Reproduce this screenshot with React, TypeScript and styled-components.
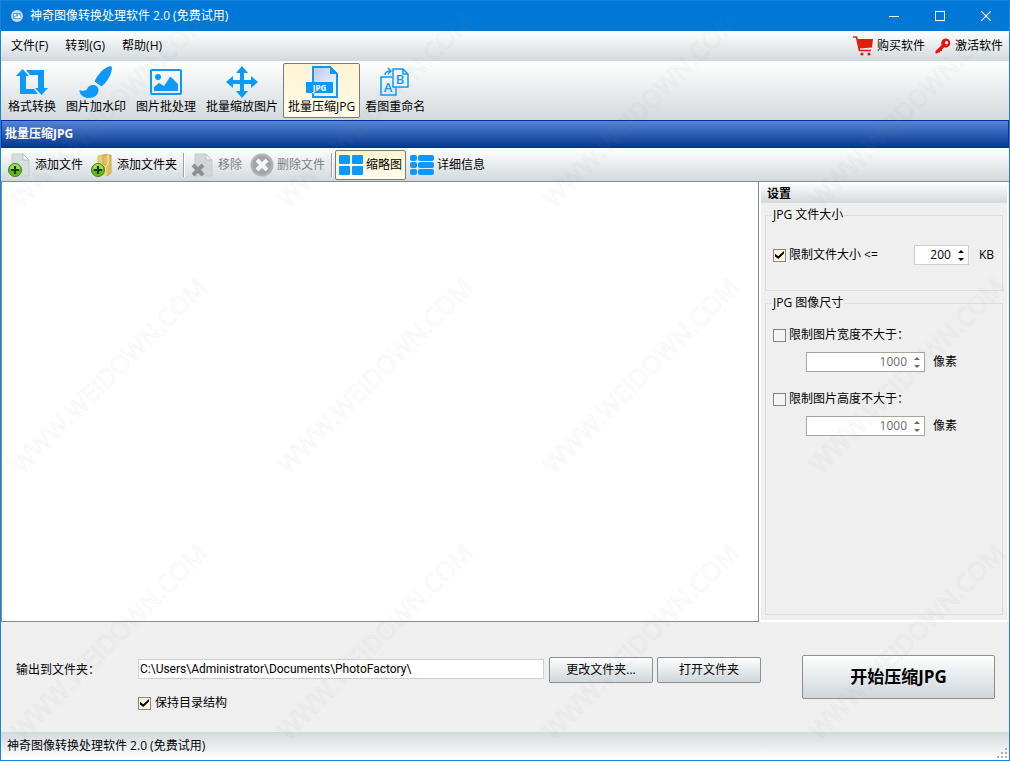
import React, { useState } from "react";
import styled, { createGlobalStyle } from "styled-components";

const GlobalStyle = createGlobalStyle`
  *, *::before, *::after { box-sizing: border-box; }
  body {
    margin: 0;
    background: #f0f0f0;
    color: #000;
    font: 12px/16px "Open Sans", "Noto Sans CJK SC", sans-serif;
  }
  button, input { font: inherit; color: inherit; }
`;

const silver = "linear-gradient(#ffffff, #d2d9dd)";

const Window = styled.div`
  position: relative;
  display: flex;
  flex-direction: column;
  min-height: 100vh;
  border: 1px solid #1883d7;
  background: #efefef;
`;

const TitleBar = styled.header`
  display: flex;
  align-items: center;
  height: 30px;
  padding-left: 8px;
  background: #0078d7;
  color: #fff;
`;

const Title = styled.h1`
  flex: 1;
  margin: 0 0 0 5px;
  font-size: 12px;
  font-weight: 400;
`;

const PlainButton = styled.button`
  display: flex;
  align-items: center;
  justify-content: center;
  padding: 0;
  border: 0;
  background: none;
  white-space: nowrap;
`;

const CaptionButton = styled(PlainButton)`
  width: 46px;
  height: 30px;
`;

const MenuBar = styled.nav`
  display: flex;
  align-items: center;
  gap: 1px;
  height: 30px;
  padding: 0 6px 0 2px;
  background: ${silver};
`;

const MenuItem = styled(PlainButton)`
  padding: 0 8px;
`;

const MenuSpacer = styled.div`
  flex: 1;
`;

const MenuLink = styled.a`
  display: flex;
  align-items: center;
  gap: 3px;
  margin-left: 9px;
  color: inherit;
  text-decoration: none;
`;

const ToolBar = styled.div`
  display: flex;
  align-items: center;
  height: 59px;
  padding: 0 2px;
  background: ${silver};
`;

const toggled = `
  border-color: #7b7b7b;
  background: linear-gradient(#fff5d2, #fffbea);
`;

const ToolButton = styled.button<{ $active?: boolean }>`
  display: flex;
  flex-direction: column;
  align-items: center;
  gap: 1px;
  height: 55px;
  padding: 2px 4px 0;
  border: 1px solid transparent;
  border-radius: 2px;
  background: none;
  white-space: nowrap;
  ${(p) => p.$active && toggled}
`;

const Heading = styled.h2`
  height: 28px;
  margin: 0;
  padding: 0 3px;
  border: 1px solid #00309c;
  background: linear-gradient(#5585d6, #06388f);
  color: #fff;
  font-size: 12px;
  font-weight: 700;
  line-height: 25px;
`;

const ActionBar = styled.div`
  display: flex;
  align-items: center;
  height: 34px;
  padding: 0 3px;
  border-bottom: 1px solid #858b95;
  background: ${silver};
`;

const ActionButton = styled.button<{ $active?: boolean }>`
  display: flex;
  align-items: center;
  gap: 3px;
  height: 30px;
  padding: 0 3px;
  border: 1px solid transparent;
  border-radius: 2px;
  background: none;
  white-space: nowrap;
  ${(p) => p.$active && toggled}
  &:disabled { color: #7a7f82; }
`;

const Separator = styled.span`
  width: 2px;
  height: 24px;
  margin: 0 2px;
  border-left: 1px solid #9a9fa3;
  border-right: 1px solid #fff;
`;

const Main = styled.main`
  display: flex;
  flex: 1;
`;

const FileList = styled.section`
  flex: 1;
  border: solid #858b95;
  border-width: 0 1px 1px;
  background: #fff;
`;

const Settings = styled.aside`
  display: flex;
  flex-direction: column;
  width: 250px;
  padding-bottom: 1px;
  border: 2px solid #fff;
  border-top: 0;
`;

const SettingsTitle = styled.h3`
  height: 21px;
  margin: 0 0 4px;
  padding: 0 6px;
  background: ${silver};
  font-size: 12px;
  font-weight: 700;
  line-height: 23px;
`;

const Group = styled.fieldset<{ $grow?: boolean }>`
  flex: ${(p) => (p.$grow ? 1 : "none")};
  height: ${(p) => (p.$grow ? "auto" : "84px")};
  min-width: 0;
  margin: 0 4px 4px;
  padding: 0 8px 0 7px;
  border: 1px solid #dcdcdc;
`;

const Legend = styled.legend`
  margin-left: -1px;
  padding: 0 1px;
`;

const OptionRow = styled.div`
  display: flex;
  align-items: center;
  height: 20px;
`;

const SizeRow = styled(OptionRow)`
  margin-top: 22px;
`;

const CheckLabel = styled.label`
  display: flex;
  align-items: center;
  gap: 3px;
  flex: 1;
  white-space: nowrap;
`;

const CheckBox = styled.input`
  appearance: none;
  display: grid;
  place-content: center;
  flex: none;
  width: 13px;
  height: 13px;
  margin: 0;
  border: 1px solid #858585;
  background: #f4f4f4;
  &:checked { background: #fff8de; }
  &:checked::after {
    content: "";
    width: 9px;
    height: 8px;
    background: #000;
    clip-path: polygon(0 35%, 36% 65%, 100% 0, 100% 32%, 36% 100%, 0 68%);
  }
`;

const Unit = styled.span<{ $gap: number }>`
  margin-left: ${(p) => p.$gap}px;
`;

const LimitBlock = styled.div`
  height: 64px;
  padding-top: 16px;
`;

const LimitRow = styled(OptionRow)`
  margin: 9px 0 0 33px;
`;

const SpinFrame = styled.span<{ $width: number; $off: boolean }>`
  display: flex;
  align-items: center;
  width: ${(p) => p.$width}px;
  height: 20px;
  border: 1px solid ${(p) => (p.$off ? "#aaa797" : "#cfcfcf")};
  background: #fff;
  color: ${(p) => (p.$off ? "#6d6d6d" : "#000")};
`;

const SpinInput = styled.input`
  flex: 1;
  min-width: 0;
  height: 18px;
  padding: 0 3px 2px 0;
  border: 0;
  outline: 0;
  background: none;
  text-align: right;
`;

const SpinButtons = styled.span`
  display: flex;
  flex-direction: column;
  width: 14px;
`;

const SpinButton = styled(PlainButton)`
  height: 8px;
`;

const Output = styled.footer`
  display: flex;
  align-items: flex-start;
  height: 110px;
  padding: 33px 14px 0 15px;
`;

const OutputForm = styled.div`
  display: grid;
  grid-template-columns: 118px 1fr 104px 104px;
  align-items: center;
  column-gap: 4px;
  row-gap: 12px;
  flex: 1;
  padding-top: 2px;
`;

const PathInput = styled.input`
  min-width: 0;
  height: 20px;
  margin: 0 1px 2px 0;
  padding: 0 1px;
  border: 1px solid #cfcfcf;
  background: #fff;
  font-family: Roboto, "Noto Sans CJK SC", sans-serif;
`;

const KeepTree = styled(CheckLabel)`
  grid-column: 2;
  gap: 4px;
`;

const PushButton = styled.button`
  height: 26px;
  padding: 0;
  border: 1px solid #8c8e90;
  border-radius: 2px;
  background: linear-gradient(#fdfefe, #ced7dc);
  white-space: nowrap;
`;

const StartButton = styled(PushButton)`
  width: 193px;
  height: 44px;
  margin-left: 41px;
  font-size: 17px;
  font-weight: 700;
`;

const StatusBar = styled.div`
  display: flex;
  align-items: center;
  justify-content: space-between;
  height: 28px;
  padding-left: 6px;
  background: linear-gradient(#d2d9dd, #ffffff);
`;

const Grip = styled.svg`
  align-self: flex-end;
  margin: 0 2px 2px 0;
`;

const Watermark = styled.svg`
  position: absolute;
  inset: 0;
  width: 100%;
  height: 100%;
  pointer-events: none;
`;

const BLUE = "#0c99fb";

const AppIcon = () => (
  <svg width="16" height="16" viewBox="0 0 16 16">
    <rect width="16" height="16" rx="3" fill="#0d6fd8" />
    <circle cx="8" cy="8" r="6" fill="#b9dcf6" />
    <rect x="4" y="5" width="8" height="6" rx="1" fill="#5aa6e8" />
    <path d="M5 10l2-2 1 1 2-3 2 4z" fill="#fff" />
    <circle cx="6" cy="7" r="1" fill="#fff" />
  </svg>
);

const CartIcon = () => (
  <svg width="21" height="20" viewBox="0 0 21 20">
    <path d="M0 1h3.500l3 13.500H18" fill="none" stroke="#df1f0b" strokeWidth="1.600" />
    <path d="M4 3h16l-1 8.500-13 1z" fill="#df1f0b" />
    <circle cx="9" cy="18" r="1.600" fill="#df1f0b" />
    <circle cx="16" cy="18" r="1.600" fill="#df1f0b" />
  </svg>
);

const KeyIcon = () => (
  <svg width="17" height="16" viewBox="0 0 17 16">
    <path
      fillRule="evenodd"
      d="M11 0.500a4.500 4.500 0 1 1-1.800 8.700L7 11.500V13H5.500L5 14.500H3L2 15.500H0.500V13L6.700 7A4.500 4.500 0 0 1 11 0.500zM11.500 3a1.700 1.700 0 1 0 .1 0z"
      fill="#e8130f"
    />
  </svg>
);

const ConvertIcon = () => (
  <svg width="32" height="32" viewBox="0 0 32 32" fill={BLUE}>
    <path d="M6.500 3l6.500 7H10v13h8l4 5H4V10H0z" />
    <path d="M25.500 29L19 22h3V9h-8l-4-5h18v18h4z" />
  </svg>
);

const BrushIcon = () => (
  <svg width="34" height="32" viewBox="0 0 34 32" fill={BLUE}>
    <path d="M32.500 0.500c1 1.500 0 5-1 8-2 4-5 9-9 12l-7-5C18 10 22 5 26 2.500c2-1.700 5-3 6.500-2z" />
    <path d="M14 19c3 0 5.500 2 5.500 5 0 5-4.500 8-9.500 8-5 0-8.500-2.500-9.500-6.500V24l3 1 4-1c1-2.500 3-5 6.500-5z" />
  </svg>
);

const PictureIcon = () => (
  <svg width="32" height="32" viewBox="0 0 32 32" fill={BLUE}>
    <rect x="1" y="4" width="30" height="24" rx="1" fill="none" stroke={BLUE} strokeWidth="2" />
    <circle cx="8" cy="11" r="3" />
    <path d="M4 25v-4l5-4 5 3 6-9h1l7 7v7z" />
  </svg>
);

const ResizeIcon = () => (
  <svg width="32" height="32" viewBox="0 0 32 32" fill={BLUE}>
    <path d="M16 0l6 7h-4v7h7v-4l7 6-7 6v-4h-7v7h4l-6 7-6-7h4v-7H7v4l-7-6 7-6v4h7V7h-4z" />
  </svg>
);

const JpgIcon = () => (
  <svg width="32" height="32" viewBox="0 0 32 32">
    <defs>
      <linearGradient id="sheet" x1="0" x2="1" y1="0" y2="1">
        <stop offset="0" stopColor="#b8c8ee" />
        <stop offset="1" stopColor="#ffffff" />
      </linearGradient>
    </defs>
    <path d="M7 1h17l7 7v23H7z" fill="url(#sheet)" stroke={BLUE} strokeWidth="2" />
    <path d="M24 0l8 8h-8z" fill={BLUE} />
    <rect x="0" y="16" width="27" height="11" fill={BLUE} />
    <text x="13.500" y="24.500" textAnchor="middle" fontSize="8" fontWeight="700" fill="#fff">JPG</text>
  </svg>
);

const RenameIcon = () => (
  <svg width="32" height="32" viewBox="0 0 32 32" fill="none" stroke={BLUE} strokeWidth="1.500">
    <path d="M13 11H2v18h15V20" />
    <path d="M14 3h10l5 5v13H14z" fill="#f6f8fa" />
    <path d="M24 3v5h5" />
    <path d="M6 9c0-3 2-4 6-4M9 2l3 3-3 3" />
    <text x="9" y="26" textAnchor="middle" fontSize="13" fontWeight="600" fill={BLUE} stroke="none">A</text>
    <text x="21" y="18" textAnchor="middle" fontSize="13" fontWeight="600" fill={BLUE} stroke="none">B</text>
  </svg>
);

const PlusBadge = () => (
  <g>
    <circle cx="7" cy="17" r="6.500" fill="#62b91a" stroke="#3b860c" />
    <path d="M2 16a5 5 0 0 1 10 0z" fill="#a5dc52" />
    <path d="M7 13v8M3 17h8" stroke="#163f05" strokeWidth="2.200" />
  </g>
);

const AddFileIcon = () => (
  <svg width="24" height="24" viewBox="0 0 24 24">
    <path d="M4 1h11l6 6v16H4z" fill="#d5dfdc" stroke="#c3cdca" />
    <path d="M15 1l6 6h-6z" fill="#f6f9f8" stroke="#b4c0bd" />
    <PlusBadge />
  </svg>
);

const AddFolderIcon = () => (
  <svg width="23" height="24" viewBox="0 0 23 24">
    <path d="M7 3l9-2v20l-9 2z" fill="#e8cf78" stroke="#d8c070" />
    <path d="M12 2h8v18l-4 3-1-10-3-2z" fill="#dcbf62" stroke="#c9ab50" />
    <path d="M17 2v9l-2 2v9" fill="none" stroke="#fff0b8" />
    <PlusBadge />
  </svg>
);

const RemoveIcon = () => (
  <svg width="24" height="24" viewBox="0 0 24 24">
    <path d="M4 1h11l6 6v16H4z" fill="#d3d6d8" stroke="#c5c9cb" />
    <path d="M15 1l6 6h-6z" fill="#eceeef" stroke="#bfc3c5" />
    <path d="M2 12l10 10M12 12L2 22" stroke="#8d9194" strokeWidth="4" />
  </svg>
);

const DeleteIcon = () => (
  <svg width="24" height="24" viewBox="0 0 24 24">
    <circle cx="12" cy="12" r="11.500" fill="#b2b5b7" />
    <circle cx="12" cy="12" r="9.500" fill="#a2a5a7" />
    <path d="M7 7l10 10M17 7L7 17" stroke="#f4f5f5" strokeWidth="4" />
  </svg>
);

const ThumbIcon = () => (
  <svg width="24" height="22" viewBox="0 0 24 22" fill={BLUE}>
    <rect x="0" y="1" width="11" height="9" rx="1" />
    <rect x="13" y="1" width="11" height="9" rx="1" />
    <rect x="0" y="12" width="11" height="9" rx="1" />
    <rect x="13" y="12" width="11" height="9" rx="1" />
  </svg>
);

const DetailIcon = () => (
  <svg width="24" height="22" viewBox="0 0 24 22" fill={BLUE}>
    {[1, 8, 15].map((y) => (
      <g key={y}>
        <rect x="0" y={y} width="7" height="6" rx="2" />
        <rect x="8" y={y} width="16" height="6" rx="2" />
      </g>
    ))}
  </svg>
);

const tools = [
  { label: "格式转换", Icon: ConvertIcon },
  { label: "图片加水印", Icon: BrushIcon },
  { label: "图片批处理", Icon: PictureIcon },
  { label: "批量缩放图片", Icon: ResizeIcon },
  { label: "批量压缩JPG", Icon: JpgIcon },
  { label: "看图重命名", Icon: RenameIcon },
];

interface SpinBoxProps {
  label: string;
  initial: number;
  width: number;
  disabled: boolean;
}

function SpinBox({ label, initial, width, disabled }: SpinBoxProps) {
  const [value, setValue] = useState(initial);
  return (
    <SpinFrame $width={width} $off={disabled}>
      <SpinInput
        type="text"
        inputMode="numeric"
        aria-label={label}
        value={value}
        disabled={disabled}
        onChange={(e) => setValue(Number(e.target.value) || 0)}
      />
      <SpinButtons>
        <SpinButton aria-label="增加" disabled={disabled} onClick={() => setValue(value + 1)}>
          <svg width="6" height="3" viewBox="0 0 6 3"><path d="M0 3L3 0 6 3z" fill="currentColor" /></svg>
        </SpinButton>
        <SpinButton aria-label="减少" disabled={disabled} onClick={() => setValue(Math.max(0, value - 1))}>
          <svg width="6" height="3" viewBox="0 0 6 3"><path d="M0 0L3 3 6 0z" fill="currentColor" /></svg>
        </SpinButton>
      </SpinButtons>
    </SpinFrame>
  );
}

function PixelLimit({ label }: { label: string }) {
  const [on, setOn] = useState(false);
  return (
    <LimitBlock>
      <CheckLabel>
        <CheckBox type="checkbox" checked={on} onChange={(e) => setOn(e.target.checked)} />
        {label}
      </CheckLabel>
      <LimitRow>
        <SpinBox label={label} initial={1000} width={119} disabled={!on} />
        <Unit $gap={8}>像素</Unit>
      </LimitRow>
    </LimitBlock>
  );
}

export default function App() {
  const [tool, setTool] = useState(4);
  const [view, setView] = useState("thumb");
  const [limitSize, setLimitSize] = useState(true);

  return (
    <>
      <GlobalStyle />
      <Window>
        <TitleBar>
          <AppIcon />
          <Title>神奇图像转换处理软件 2.0 (免费试用)</Title>
          <CaptionButton aria-label="最小化">
            <svg width="10" height="10"><path d="M0 5.500h10" stroke="#fff" /></svg>
          </CaptionButton>
          <CaptionButton aria-label="最大化">
            <svg width="10" height="10"><rect x=".5" y=".5" width="9" height="9" fill="none" stroke="#fff" /></svg>
          </CaptionButton>
          <CaptionButton aria-label="关闭">
            <svg width="10" height="10"><path d="M0 0l10 10M10 0L0 10" stroke="#fff" strokeWidth="1.200" /></svg>
          </CaptionButton>
        </TitleBar>

        <MenuBar>
          <MenuItem>文件(F)</MenuItem>
          <MenuItem>转到(G)</MenuItem>
          <MenuItem>帮助(H)</MenuItem>
          <MenuSpacer />
          <MenuLink href="#buy"><CartIcon />购买软件</MenuLink>
          <MenuLink href="#activate"><KeyIcon />激活软件</MenuLink>
        </MenuBar>

        <ToolBar>
          {tools.map(({ label, Icon }, i) => (
            <ToolButton key={label} $active={tool === i} onClick={() => setTool(i)}>
              <Icon />
              {label}
            </ToolButton>
          ))}
        </ToolBar>

        <Heading>批量压缩JPG</Heading>

        <ActionBar>
          <ActionButton><AddFileIcon />添加文件</ActionButton>
          <ActionButton><AddFolderIcon />添加文件夹</ActionButton>
          <Separator />
          <ActionButton disabled><RemoveIcon />移除</ActionButton>
          <ActionButton disabled><DeleteIcon />删除文件</ActionButton>
          <Separator />
          <ActionButton $active={view === "thumb"} onClick={() => setView("thumb")}>
            <ThumbIcon />缩略图
          </ActionButton>
          <ActionButton $active={view === "detail"} onClick={() => setView("detail")}>
            <DetailIcon />详细信息
          </ActionButton>
        </ActionBar>

        <Main>
          <FileList aria-label="文件列表" />
          <Settings>
            <SettingsTitle>设置</SettingsTitle>
            <Group>
              <Legend>JPG 文件大小</Legend>
              <SizeRow>
                <CheckLabel>
                  <CheckBox
                    type="checkbox"
                    checked={limitSize}
                    onChange={(e) => setLimitSize(e.target.checked)}
                  />
                  限制文件大小 &lt;=
                </CheckLabel>
                <SpinBox label="文件大小" initial={200} width={55} disabled={!limitSize} />
                <Unit $gap={10}>KB</Unit>
              </SizeRow>
            </Group>
            <Group $grow>
              <Legend>JPG 图像尺寸</Legend>
              <PixelLimit label="限制图片宽度不大于：" />
              <PixelLimit label="限制图片高度不大于：" />
            </Group>
          </Settings>
        </Main>

        <Output>
          <OutputForm>
            <label htmlFor="output-path">输出到文件夹：</label>
            <PathInput
              id="output-path"
              type="text"
              defaultValue={"C:\\Users\\Administrator\\Documents\\PhotoFactory\\"}
            />
            <PushButton>更改文件夹...</PushButton>
            <PushButton>打开文件夹</PushButton>
            <KeepTree>
              <CheckBox type="checkbox" defaultChecked />
              保持目录结构
            </KeepTree>
          </OutputForm>
          <StartButton>开始压缩JPG</StartButton>
        </Output>

        <StatusBar>
          神奇图像转换处理软件 2.0 (免费试用)
          <Grip width="10" height="10" fill="#a9afb3" aria-hidden="true">
            <rect x="8" y="0" width="2" height="2" />
            <rect x="4" y="4" width="2" height="2" />
            <rect x="8" y="4" width="2" height="2" />
            <rect x="0" y="8" width="2" height="2" />
            <rect x="4" y="8" width="2" height="2" />
            <rect x="8" y="8" width="2" height="2" />
          </Grip>
        </StatusBar>

        <Watermark aria-hidden="true">
          <defs>
            <pattern id="mark" width="266" height="266" y="-58" patternUnits="userSpaceOnUse">
              <text
                transform="translate(21 266) rotate(-45)"
                fontSize="25"
                fill="none"
                stroke="#808080"
                strokeOpacity="0.07"
                strokeWidth="1"
              >
                WWW.WEIDOWN.COM
              </text>
            </pattern>
          </defs>
          <rect width="100%" height="100%" fill="url(#mark)" />
        </Watermark>
      </Window>
    </>
  );
}
